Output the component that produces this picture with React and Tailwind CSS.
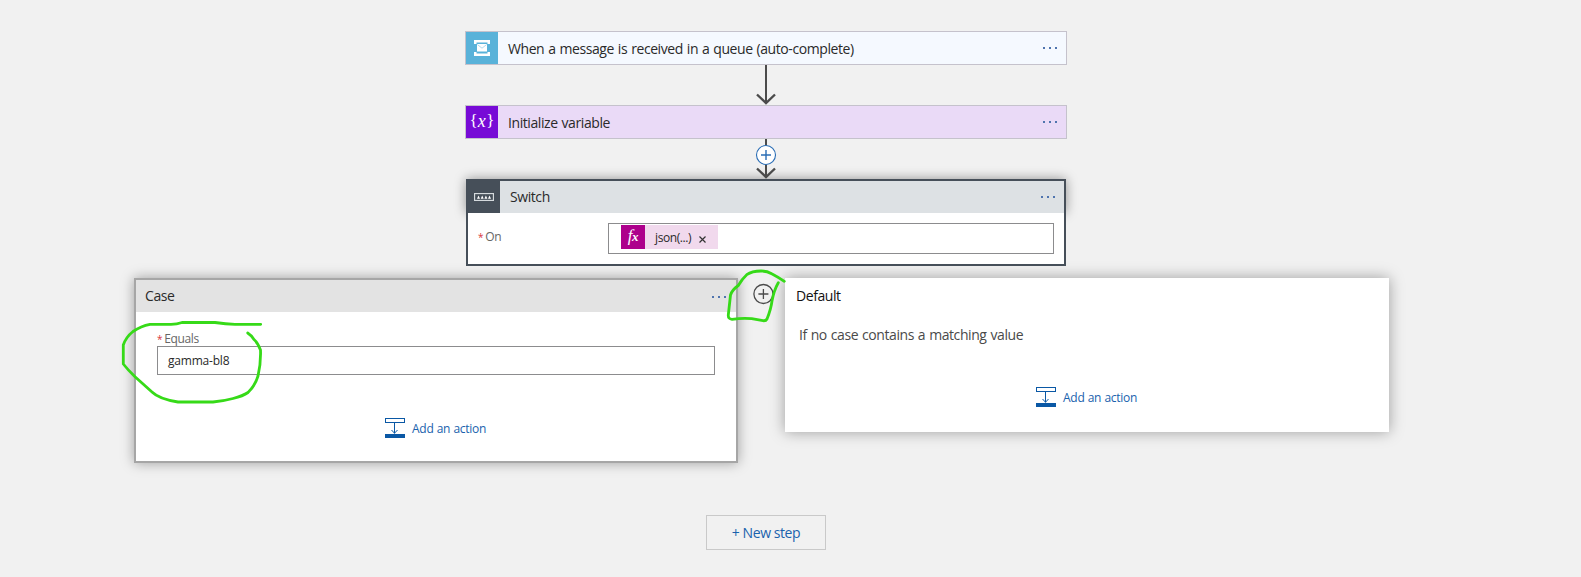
import React from "react";

function Dots() {
  return (
    <div className="flex gap-1">
      <span className="size-[2px] bg-[#4f74ae]" />
      <span className="size-[2px] bg-[#4f74ae]" />
      <span className="size-[2px] bg-[#4f74ae]" />
    </div>
  );
}

function QueueIcon() {
  return (
    <svg width="32" height="32" viewBox="0 0 32 32" fill="#fff">
      <path d="M8 8h16v4h-2.5v-1.5h-11V12H8zM8 24h16v-4h-2.5v1.5h-11V20H8z" />
      <rect x="11" y="12" width="10" height="7.500" />
      <path d="M11.300 12.500 16 16.200l4.700-3.700" fill="none" stroke="#9fd2e8" strokeWidth=".8" />
    </svg>
  );
}

function SwitchIcon() {
  return (
    <svg width="20" height="8" viewBox="0 0 20 8">
      <rect x=".5" y=".5" width="19" height="7" fill="none" stroke="#d5dadd" strokeWidth="1.300" />
      <path d="M3 5.700 4.500 2.500 6 5.700zM6.700 5.700l1.500-3.200 1.500 3.200zM10.400 5.700l1.500-3.200 1.500 3.200zM14 5.700l1.500-3.200 1.500 3.200z" fill="#fff" />
    </svg>
  );
}

function AddAction() {
  return (
    <div className="flex h-5 items-start gap-[7px] text-[12px] leading-5 tracking-[-0.25px] [word-spacing:0.3px] text-[#1a62ad]">
      <svg width="20" height="20" viewBox="0 0 20 20" fill="none" stroke="#0a58a5">
        <rect x=".5" y=".5" width="19" height="4" />
        <path d="M9.500 5v10.500M6.500 12l3 3.200 3-3.200" />
        <path d="M0 18h20" strokeWidth="4" />
      </svg>
      <span className="pt-px">Add an action</span>
    </div>
  );
}

function Step({ icon, title, tone }) {
  return (
    <div className={"flex h-[34px] w-[602px] items-center border border-[#c5c2cc] pr-[9px] " + tone}>
      {icon}
      <span className="ml-[10px] flex-1 pt-px">{title}</span>
      <Dots />
    </div>
  );
}

export default function App() {
  return (
    <main className="relative h-[577px] w-[1581px] overflow-hidden bg-[#f1f1f1] pt-[31px] font-['Open_Sans','Noto_Sans',sans-serif] text-[14px] leading-5 tracking-[-0.42px] [word-spacing:0.7px] text-[#2a2a2a]">
      <div className="ml-[465px] flex w-[602px] flex-col">
        <Step icon={<div className="size-8 bg-[#59b2d9]"><QueueIcon /></div>} title="When a message is received in a queue (auto-complete)" tone="bg-[#f5f9ff]" />
        <svg className="self-center" width="22" height="40" viewBox="0 0 22 40" fill="none" stroke="#4b4b4b">
          <path d="M11 0v38" strokeWidth="2" />
          <path d="m2 29.500 9 8.500 9-8.500" strokeWidth="2.400" />
        </svg>
        <Step
          icon={<div className="flex size-8 items-center justify-center bg-[#770bd6] pb-[3px] font-['Liberation_Serif',serif] text-[17px] tracking-[0.3px] text-white">{"{"}<i className="text-[18px]">x</i>{"}"}</div>}
          title="Initialize variable"
          tone="bg-[#eadaf7]"
        />
        <svg className="relative z-10 self-center" width="22" height="40" viewBox="0 0 22 40" fill="none" stroke="#4b4b4b">
          <path d="M11 0v38" strokeWidth="2" />
          <path d="m2 29.500 9 8.500 9-8.500" strokeWidth="2.400" />
          <circle cx="11" cy="16" r="9.500" fill="#fff" stroke="#2a6db5" strokeWidth="1.100" />
          <path d="M11 11v10M6 16h10" stroke="#2a6db5" strokeWidth="1.400" />
        </svg>
      </div>

      <section className="ml-[466px] w-[600px]">
        <div className="flex h-[34px] items-center border-2 border-b-0 border-[#464f59] bg-[#dde1e4] pr-[9px] shadow-[0_0_12px_rgba(0,0,0,0.4)]">
          <div className="flex size-8 items-center justify-center bg-[#464f59]"><SwitchIcon /></div>
          <span className="ml-[10px] flex-1">Switch</span>
          <Dots />
        </div>
        <div className="relative flex h-[53px] items-start border-2 border-t-0 border-[#464f59] bg-white pt-[10px] pr-[10px]">
          <div className="mt-[4px] flex w-[130px] pl-[10px] text-[12px] tracking-[-0.3px] text-[#666]">
            <span className="mr-[2px] text-[10px] text-[#d8343c]">*</span>On
          </div>
          <div className="ml-auto flex h-[31px] w-[446px] border border-[#8c8c8e] pt-px pl-3">
            <div className="flex h-6 w-[97px] items-center bg-[#f1d9ed] text-[12px] tracking-[-0.4px]">
              <div className="flex size-6 items-center justify-center bg-[#ad008c] pb-[3px] font-['Liberation_Serif',serif] text-[17px] italic text-white">
                f<span className="mt-[3px] text-[13px] font-bold">x</span>
              </div>
              <span className="ml-[10px] flex-1 pt-[2px]">json(...)</span>
              <svg className="mt-[4px] mr-[12px]" width="7" height="7" viewBox="0 0 7 7" stroke="#333" strokeWidth="1.200"><path d="m.5.5 6 6m0-6-6 6" /></svg>
            </div>
          </div>
        </div>
      </section>

      <div className="mt-3 ml-[134px] flex items-start">
        <section className="h-[185px] w-[604px] border-2 border-[#a6a6a6] bg-white shadow-[0_0_12px_rgba(0,0,0,0.35)]">
          <div className="flex h-8 items-center justify-between bg-[#e3e3e3] pt-[2px] pr-[10px] pl-[9px]">
            <span className="-mt-[2px]">Case</span>
            <Dots />
          </div>
          <div className="mt-[17px] ml-[21px] flex text-[12px] tracking-[-0.35px] text-[#666]">
            <span className="mr-[2px] text-[10px] text-[#d8343c]">*</span>Equals
          </div>
          <div className="-mt-[3px] ml-[21px] flex h-[29px] w-[558px] items-center border border-[#8c8c8e] pl-[10px] text-[12px] tracking-[-0.2px]">gamma-bl8</div>
          <div className="mt-[43px] ml-[249px]"><AddAction /></div>
        </section>
        <svg className="mt-[5px] ml-[14px]" width="22" height="22" viewBox="0 0 22 22" fill="none" stroke="#4b4b4b" strokeWidth="1.300">
          <circle cx="11.400" cy="11" r="9.500" />
          <path d="M11.400 6v10M6.400 11h10" />
        </svg>
        <section className="ml-[11px] h-[154px] w-[604px] bg-white pt-[8px] shadow-[0_0_14px_rgba(0,0,0,0.35)]">
          <div className="ml-[11px] text-[#111]">Default</div>
          <div className="mt-[19px] ml-[14px] text-[#4a4a4a]">If no case contains a matching value</div>
          <div className="mt-[42px] ml-[251px]"><AddAction /></div>
        </section>
      </div>

      <button className="mt-[52px] ml-[706px] h-[35px] w-[120px] border border-[#c9c9c9] text-[#1a62ad]">+ New step</button>

      <svg className="pointer-events-none absolute inset-0 z-20" width="1581" height="577" fill="none" stroke="#36da18" strokeWidth="2.800" strokeLinecap="round" strokeLinejoin="round">
        <path d="M260.700 324.300H235Q226 324.300 215 322.500H182Q177 324.300 171 324.300H150Q141 326 133 331.500 126 337 123.300 345V364Q128 370 135 376.700L152 392Q159 399 178 402H213Q224 401 233 398.500 243 396 248 392.500 255 386 258 376 261 363 260.500 350 258 343 254 339.500 251 335 247.700 333" />
        <path d="M784.300 281.300Q778 277 771.700 273.700 767 271 761 271 752 271 746.700 274.700 742 279 738.300 285.500 732 290 730.500 295L728.300 315Q728 319 732 319.300 742 318 751.700 318.700L763 320.700Q766 321 767 319 771 309 772 301 774 290 778.300 282.700" />
      </svg>
    </main>
  );
}
